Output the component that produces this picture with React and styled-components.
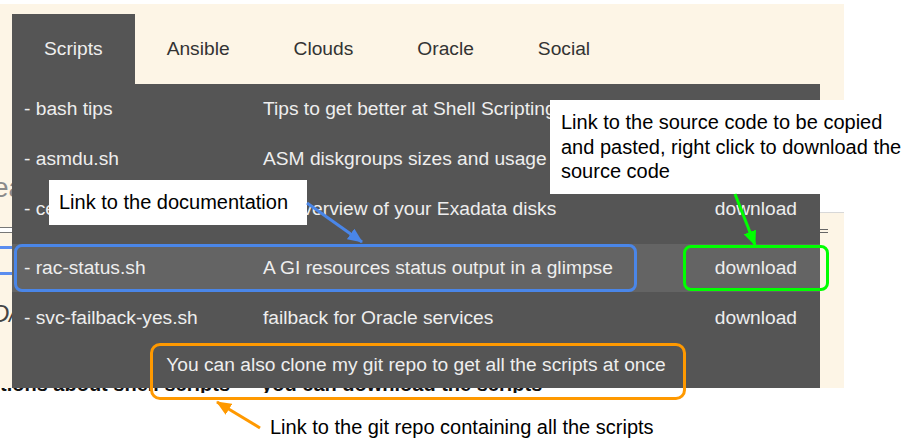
import React from "react";
import styled, { createGlobalStyle } from "styled-components";

const GlobalStyle = createGlobalStyle`
  html, body {
    margin: 0;
    padding: 0;
    background: #ffffff;
  }
  body {
    font-family: "Liberation Sans", Arial, sans-serif;
  }
`;

const Canvas = styled.div`
  position: relative;
  width: 916px;
  height: 446px;
  padding-top: 4px;
  box-sizing: border-box;
  overflow: hidden;
`;

const Page = styled.div`
  position: relative;
  width: 844px;
  height: 384px;
  background: #fdf5e6;
  display: flex;
  flex-direction: column;
`;

const TabBar = styled.nav`
  display: flex;
  padding: 10px 0 0 12px;
  height: 70px;
`;

const Tab = styled.a`
  display: flex;
  align-items: center;
  height: 70px;
  padding: 0 32px;
  font-size: 19.2px;
  text-decoration: none;
  color: ${({ $active }) => ($active ? "#eeeeee" : "#333333")};
  background: ${({ $active }) => ($active ? "#555555" : "transparent")};
`;

const Body = styled.div`
  flex: 1;
  display: flex;
  min-height: 0;
`;

const Main = styled.main`
  flex: 1;
  display: flex;
  flex-direction: column;
  padding-top: 88px;
`;

const Heading = styled.h2`
  margin: 0 0 0 -7px;
  font-size: 28px;
  line-height: 32px;
  font-weight: normal;
  color: #8a8a8a;
`;

const SearchBar = styled.div`
  margin-top: 23px;
  height: 4px;
  background: #ffffff;
  border-top: 1px solid #777;
  border-bottom: 1px solid #777;
`;

const LinkLine = styled.div`
  margin-top: ${({ $gap }) => $gap}px;
  height: 3px;
  background: #5b8def;
`;

const Snippet = styled.p`
  margin: 25px 0 0 -8px;
  font-size: 24px;
  line-height: 28px;
  color: #444;
  font-style: italic;
`;

/* only the foot of this line peeks out under the dropdown */
const IntroClip = styled.div`
  margin: auto 0 -5px 0;
  height: 5px;
  overflow: hidden;
`;

const Intro = styled.p`
  margin: -16px 0 0 0;
  font-size: 20px;
  line-height: 24px;
  font-weight: bold;
  color: #111;
  white-space: nowrap;
`;

const Aside = styled.aside`
  width: 24px;
  display: flex;
  flex-direction: column;
`;

const AsideTop = styled.div`
  height: 110px;
`;

const AsideGap = styled.div`
  height: 18px;
  background: #ffffff;
  border-bottom: 1px solid #d8d8d8;
`;

const AsideMark = styled.div`
  margin-top: 16px;
  width: 8px;
  height: 2px;
  border-top: 1px solid #666;
  border-bottom: 1px solid #666;
`;

const Menu = styled.div`
  position: absolute;
  left: 12px;
  top: 80px;
  width: 808px;
  height: 304px;
  background: #555555;
  color: #eeeeee;
  font-size: 19.2px;
`;

const Row = styled.div`
  display: grid;
  grid-template-columns: 239px 1fr auto;
  align-items: center;
  height: ${({ $active }) => ($active ? 48 : 50)}px;
  margin-top: ${({ $active }) => ($active ? 10 : 0)}px;
  margin-bottom: ${({ $active }) => ($active ? 1 : 0)}px;
  padding: 0 23px 0 12px;
  background: ${({ $active }) => ($active ? "#646464" : "transparent")};
  white-space: nowrap;
`;

const Download = styled.a`
  color: #eeeeee;
  text-decoration: none;
`;

const Footer = styled.div`
  height: 44px;
  line-height: 44px;
  text-align: center;
`;

const Note = styled.div`
  position: absolute;
  left: ${({ $x }) => $x}px;
  top: ${({ $y }) => $y}px;
  width: ${({ $w }) => $w}px;
  background: ${({ $plain }) => ($plain ? "transparent" : "#ffffff")};
  color: #000;
  font-size: 20px;
  line-height: 24.5px;
  padding: ${({ $pad }) => $pad};
  box-sizing: border-box;
  white-space: nowrap;
`;

const Frame = styled.div`
  position: absolute;
  left: ${({ $x }) => $x}px;
  top: ${({ $y }) => $y}px;
  width: ${({ $w }) => $w}px;
  height: ${({ $h }) => $h}px;
  border: 3px solid ${({ $color }) => $color};
  border-radius: ${({ $r }) => $r}px;
  box-sizing: border-box;
`;

const Arrows = styled.svg`
  position: absolute;
  left: 0;
  top: 0;
  pointer-events: none;
`;

const scripts = [
  { name: "- bash tips", desc: "Tips to get better at Shell Scripting" },
  { name: "- asmdu.sh", desc: "ASM diskgroups sizes and usage" },
  { name: "- cell-status.sh", desc: "An overview of your Exadata disks", dl: true },
  { name: "- rac-status.sh", desc: "A GI resources status output in a glimpse", dl: true, active: true },
  { name: "- svc-failback-yes.sh", desc: "failback for Oracle services", dl: true },
];

const tabs = ["Scripts", "Ansible", "Clouds", "Oracle", "Social"];

const arrows = [
  { id: "blue", color: "#4a86e8", x1: 307, y1: 203, x2: 362, y2: 242 },
  { id: "green", color: "#00ff00", x1: 735, y1: 194, x2: 755, y2: 245 },
  { id: "orange", color: "#ff9900", x1: 260, y1: 428, x2: 217, y2: 402 },
];

export default function App() {
  return (
    <>
      <GlobalStyle />
      <Canvas>
        <Page>
          <TabBar>
            {tabs.map((t, i) => (
              <Tab key={t} $active={i === 0}>
                {t}
              </Tab>
            ))}
          </TabBar>
          <Body>
            <Main>
              <Heading>eady to go</Heading>
              <SearchBar />
              <LinkLine $gap={13} />
              <LinkLine $gap={23} />
              <Snippet>D/</Snippet>
              <IntroClip>
                <Intro>tions about shell scripts — you can download the scripts</Intro>
              </IntroClip>
            </Main>
            <Aside>
              <AsideTop />
              <AsideGap />
              <AsideMark />
            </Aside>
          </Body>

          <Menu>
            {scripts.map((s) => (
              <Row key={s.name} $active={s.active}>
                <span>{s.name}</span>
                <span>{s.desc}</span>
                {s.dl ? <Download>download</Download> : <span />}
              </Row>
            ))}
            <Footer>You can also clone my git repo to get all the scripts at once</Footer>
          </Menu>
        </Page>

        <Note $x={49} $y={180} $w={258} $pad="10px 10px" style={{ height: 45 }}>
          Link to the documentation
        </Note>
        <Note $x={550} $y={100} $w={366} $pad="10px 11px" style={{ height: 94 }}>
          Link to the source code to be copied
          <br />
          and pasted, right click to download the
          <br />
          source code
        </Note>
        <Note $x={270} $y={415} $w={420} $pad="0" $plain>
          Link to the git repo containing all the scripts
        </Note>

        <Frame $x={14} $y={244} $w={623} $h={48} $r={8} $color="#4a86e8" />
        <Frame $x={683} $y={245} $w={146} $h={46} $r={8} $color="#00ff00" />
        <Frame $x={150} $y={343} $w={536} $h={57} $r={10} $color="#ff9900" />

        <Arrows width="916" height="446" viewBox="0 0 916 446">
          <defs>
            {arrows.map((a) => (
              <marker
                key={a.id}
                id={`head-${a.id}`}
                viewBox="0 0 15 13"
                refX="14"
                refY="6.5"
                markerWidth="15"
                markerHeight="13"
                markerUnits="userSpaceOnUse"
                orient="auto"
              >
                <path d="M0 0 L15 6.5 L0 13 Z" fill={a.color} />
              </marker>
            ))}
          </defs>
          {arrows.map((a) => (
            <line
              key={a.id}
              x1={a.x1}
              y1={a.y1}
              x2={a.x2}
              y2={a.y2}
              stroke={a.color}
              strokeWidth="3"
              markerEnd={`url(#head-${a.id})`}
            />
          ))}
        </Arrows>
      </Canvas>
    </>
  );
}
